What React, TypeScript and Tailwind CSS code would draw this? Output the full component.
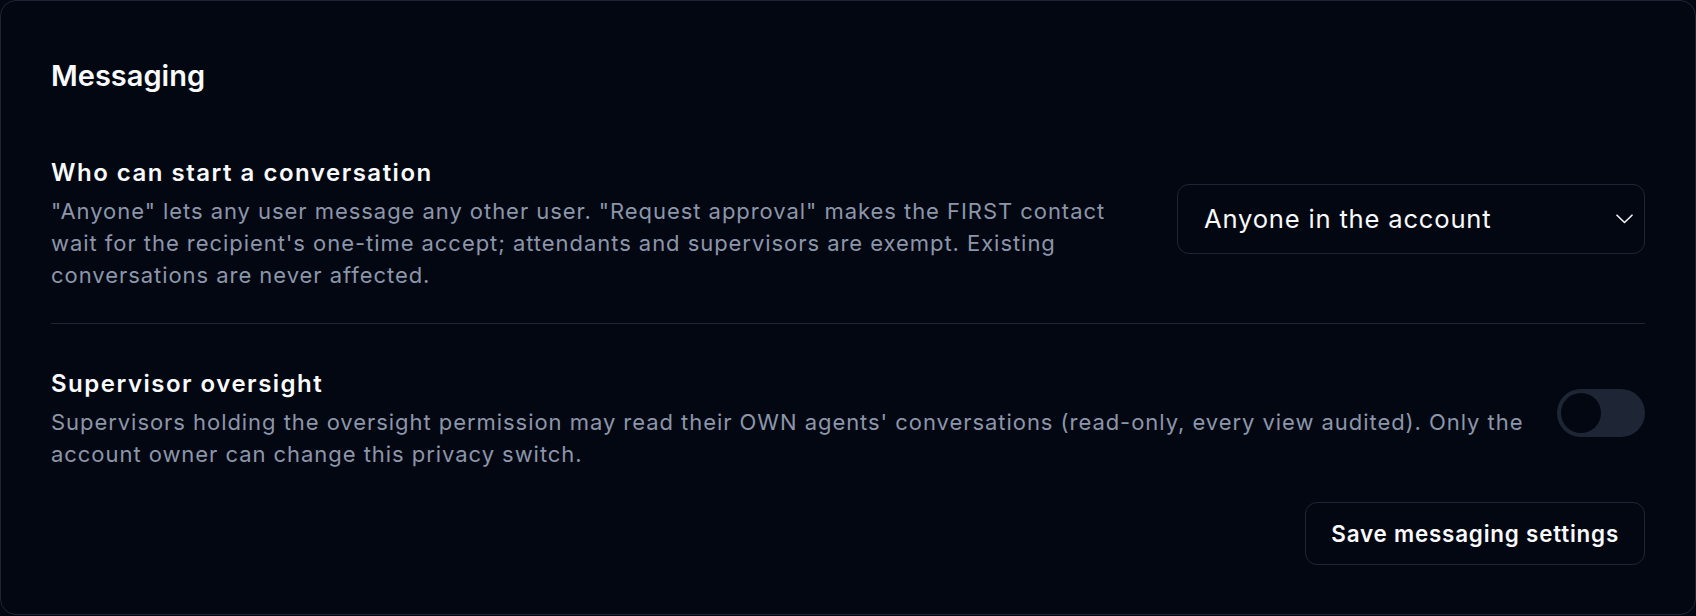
import { useState } from 'react';

const font = { fontFamily: 'Inter, "Noto Sans", sans-serif' };

interface SettingRowProps {
  title: string;
  description: string;
  controlClassName?: string;
  children: React.ReactNode;
}

function SettingRow({ title, description, controlClassName = '', children }: SettingRowProps) {
  return (
    <div className="flex items-start gap-8">
      <div className="min-w-0 flex-1">
        <h3 className="text-[24px] font-semibold leading-8 tracking-[1.5px] text-gray-50">{title}</h3>
        <p className="mt-[6px] text-[22px] leading-8 tracking-[0.95px] text-[#8c96aa]">{description}</p>
      </div>
      <div className={`shrink-0 ${controlClassName}`}>{children}</div>
    </div>
  );
}

function ChevronDown() {
  return (
    <svg width="17" height="10" viewBox="0 0 17 10" fill="none">
      <polyline points="1,1.2 8.5,8.5 16,1.2" stroke="#f3f4f6" strokeWidth="1.6" strokeLinecap="round" strokeLinejoin="round" />
    </svg>
  );
}

export default function App() {
  const [oversight, setOversight] = useState(false);

  return (
    <div className="min-h-screen bg-[#030712]" style={font}>
      <div className="rounded-[16px] border border-[#1e2636] bg-[#030712] px-[50px] pt-[57px] pb-[49px]">
        <h2 className="text-[29px] font-semibold leading-[36px] text-gray-50">Messaging</h2>

        <div className="mt-[63px]">
          <SettingRow
            title="Who can start a conversation"
            description={'"Anyone" lets any user message any other user. "Request approval" makes the FIRST contact wait for the recipient\'s one-time accept; attendants and supervisors are exempt. Existing conversations are never affected.'}
            controlClassName="mt-[27px]"
          >
            <button
              type="button"
              className="flex h-[70px] w-[468px] items-center justify-between rounded-[12px] border border-[#1e2636] pr-[11px] pl-[26px] text-left"
            >
              <span className="text-[25.6px] leading-none tracking-[0.8px] text-gray-50">Anyone in the account</span>
              <ChevronDown />
            </button>
          </SettingRow>
        </div>

        <div className="mt-8 h-px bg-[#1e2636]" />

        <div className="mt-[44px]">
          <SettingRow
            title="Supervisor oversight"
            description="Supervisors holding the oversight permission may read their OWN agents' conversations (read-only, every view audited). Only the account owner can change this privacy switch."
            controlClassName="mt-[21px]"
          >
            <button
              type="button"
              role="switch"
              aria-checked={oversight}
              onClick={() => setOversight(!oversight)}
              className={`flex h-[48px] w-[88px] items-center rounded-full p-[4px] ${oversight ? 'justify-end bg-[#4b5563]' : 'justify-start bg-[#1e2636]'}`}
            >
              <span className="h-[40px] w-[40px] rounded-full bg-[#030712]" />
            </button>
          </SettingRow>
        </div>

        <div className="mt-8 flex justify-end">
          <button
            type="button"
            className="h-[63px] rounded-[12px] border border-[#1e2636] px-[25px] text-[22.4px] font-semibold tracking-[0.8px] text-gray-50"
          >
            Save messaging settings
          </button>
        </div>
      </div>
    </div>
  );
}
